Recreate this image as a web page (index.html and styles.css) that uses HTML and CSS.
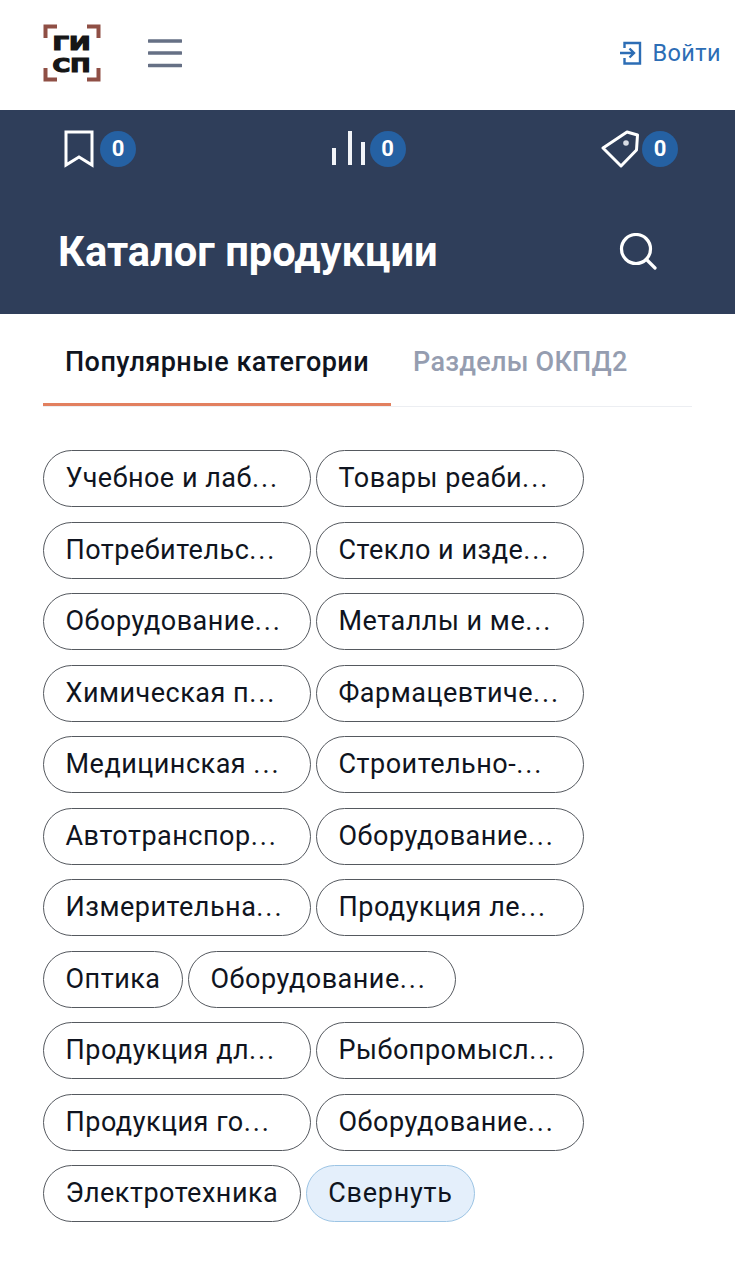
FILE: index.html
```html
<!DOCTYPE html>
<html lang="ru">
<head>
  <meta charset="UTF-8" />
  <title>Каталог продукции</title>
  <meta name="viewport" content="width=device-width, initial-scale=1.0" />
  <link rel="stylesheet" href="styles.css">
</head>
<body>

  <header class="topbar">
    <div class="topbar-left">
      <svg class="logo" width="60" height="60" viewBox="0 0 60 60" fill="none">
        <path d="M15 3.500H3.500V15M45 3.500H56.500V15M15 56.500H3.500V45M45 56.500H56.500V45" stroke="#8f4f45" stroke-width="4"/>
        <text class="logo-text" x="29.500" y="26.500" textLength="38" lengthAdjust="spacingAndGlyphs">ГИ</text>
        <text class="logo-text" x="29.500" y="48.500" textLength="38" lengthAdjust="spacingAndGlyphs">СП</text>
      </svg>
      <svg class="burger" width="34" height="30" viewBox="0 0 34 30">
        <path d="M1 3H33M1 15H33M1 27.500H33" stroke="#667085" stroke-width="3.400" stroke-linecap="round"/>
      </svg>
    </div>
    <a class="login" href="#">
      <svg width="22" height="24" viewBox="0 0 22 24" fill="none" stroke="#2c6db5" stroke-width="2.400">
        <path d="M4.500 7V2H20V22.500H4.500V17"/>
        <path d="M0 12H14M9.500 7.500L14 12L9.500 16.500"/>
      </svg>
      <span>Войти</span>
    </a>
  </header>

  <section class="hero">
    <div class="counters">
      <div class="counter">
        <svg width="30" height="38" viewBox="0 0 30 38" fill="none" stroke="#fff" stroke-width="3">
          <path d="M2 2H28V35L15 27L2 35Z"/>
        </svg>
        <span class="badge">0</span>
      </div>
      <div class="counter counter-mid">
        <svg width="34" height="36" viewBox="0 0 34 36" fill="#f2f4f8">
          <rect x="0" y="17" width="4" height="17"/>
          <rect x="16" y="0" width="4" height="34"/>
          <rect x="29" y="11" width="4" height="23"/>
        </svg>
        <span class="badge">0</span>
      </div>
      <div class="counter counter-tag">
        <svg width="38" height="38" viewBox="0 0 38 38" fill="none" stroke="#fff" stroke-width="3">
          <path d="M2 18L26 2L36.500 5L35.500 20L20 36Z" stroke-linejoin="round"/>
          <circle cx="25" cy="13" r="2.800" fill="#d9dde5" stroke="none"/>
        </svg>
        <span class="badge">0</span>
      </div>
    </div>
    <div class="hero-row">
      <h1>Каталог продукции</h1>
      <svg width="38" height="38" viewBox="0 0 38 38" fill="none" stroke="#fff" stroke-width="3.200">
        <circle cx="17" cy="16" r="14.500"/>
        <path d="M27.500 26.500L36 35" stroke-linecap="round"/>
      </svg>
    </div>
  </section>

  <main class="content">
    <nav class="tabs">
      <a class="tab tab-active" href="#">Популярные категории</a>
      <a class="tab" href="#">Разделы ОКПД2</a>
    </nav>

    <div class="pills">
      <a class="pill pill-wide" href="#">Учебное и лаб<span class="dots">...</span></a>
      <a class="pill pill-wide" href="#">Товары реаби<span class="dots">...</span></a>
      <a class="pill pill-wide" href="#">Потребительс<span class="dots">...</span></a>
      <a class="pill pill-wide" href="#">Стекло и изде<span class="dots">...</span></a>
      <a class="pill pill-wide" href="#">Оборудование<span class="dots">...</span></a>
      <a class="pill pill-wide" href="#">Металлы и ме<span class="dots">...</span></a>
      <a class="pill pill-wide" href="#">Химическая п<span class="dots">...</span></a>
      <a class="pill pill-wide" href="#">Фармацевтиче<span class="dots">...</span></a>
      <a class="pill pill-wide" href="#">Медицинская <span class="dots">...</span></a>
      <a class="pill pill-wide" href="#">Строительно-<span class="dots">...</span></a>
      <a class="pill pill-wide" href="#">Автотранспор<span class="dots">...</span></a>
      <a class="pill pill-wide" href="#">Оборудование<span class="dots">...</span></a>
      <a class="pill pill-wide" href="#">Измерительна<span class="dots">...</span></a>
      <a class="pill pill-wide" href="#">Продукция ле<span class="dots">...</span></a>
      <a class="pill" href="#">Оптика</a>
      <a class="pill pill-wide" href="#">Оборудование<span class="dots">...</span></a>
      <a class="pill pill-wide" href="#">Продукция дл<span class="dots">...</span></a>
      <a class="pill pill-wide" href="#">Рыбопромысл<span class="dots">...</span></a>
      <a class="pill pill-wide" href="#">Продукция го<span class="dots">...</span></a>
      <a class="pill pill-wide" href="#">Оборудование<span class="dots">...</span></a>
      <a class="pill" href="#">Электротехника</a>
      <a class="pill pill-toggle" href="#">Свернуть</a>
    </div>
  </main>

</body>
</html>
```

FILE: styles.css
```css
body {
  font-family: Roboto, "Liberation Sans", sans-serif;
  background: #fff;
  color: #0f1420;
  margin: 0;
}

a {
  color: inherit;
  text-decoration: none;
}

.topbar {
  display: flex;
  justify-content: space-between;
  align-items: center;
  height: 110px;
  padding: 0 14px 4px 42px;
  box-sizing: border-box;
}

.topbar-left {
  display: flex;
  align-items: center;
  gap: 46px;
}

.logo-text {
  font-family: "DejaVu Sans", sans-serif;
  font-weight: bold;
  font-size: 18.800px;
  fill: #161616;
  stroke: #161616;
  stroke-width: 1.200px;
  text-anchor: middle;
}

.login {
  display: flex;
  align-items: center;
  gap: 11px;
  color: #2c6db5;
  font-size: 23.500px;
  letter-spacing: 0.4px;
}

.hero {
  background: #2f3e5a;
  height: 204px;
  padding: 20px 58px 0;
  box-sizing: border-box;
}

.counters {
  display: flex;
  justify-content: space-between;
  padding-left: 6px;
  margin-right: -1px;
}

.counter {
  display: flex;
  align-items: center;
  gap: 6px;
  height: 38px;
}

.counter-mid {
  gap: 4px;
}

.counter-tag {
  gap: 3px;
}

.badge {
  width: 36px;
  height: 36px;
  line-height: 36px;
  border-radius: 50%;
  background: #2561a3;
  color: #fff;
  font-size: 22px;
  font-weight: bold;
  text-align: center;
}

.hero-row {
  display: flex;
  justify-content: space-between;
  align-items: center;
  margin-top: 62px;
  padding-right: 20px;
}

h1 {
  margin: 0;
  color: #fff;
  font-size: 41.700px;
  line-height: 44px;
  font-weight: bold;
}

.content {
  padding: 0 43px;
}

.tabs {
  display: flex;
  height: 92px;
  border-bottom: 1px solid #eceef2;
}

.tab {
  padding: 29px 22px 0;
  font-size: 27px;
  line-height: 38px;
  letter-spacing: 0.25px;
  font-weight: 500;
  color: #959db0;
  white-space: nowrap;
}

.tab-active {
  color: #0f1420;
  letter-spacing: 0.45px;
  border-bottom: 3px solid #e2805f;
  height: 60px;
}

.pills {
  display: flex;
  flex-wrap: wrap;
  gap: 14.500px 5px;
  margin-top: 43px;
  width: 560px;
}

.pill {
  height: 57px;
  line-height: 54px;
  padding: 0 21.500px;
  border: 1.500px solid #55595f;
  border-radius: 29px;
  box-sizing: border-box;
  font-size: 27px;
  letter-spacing: 0.5px;
  white-space: nowrap;
}

.pill-wide {
  width: 268px;
}

.dots {
  letter-spacing: 1.900px;
}

.pill-toggle {
  background: #e4effb;
  border-color: #9cc4e4;
  letter-spacing: 0.75px;
}
```
